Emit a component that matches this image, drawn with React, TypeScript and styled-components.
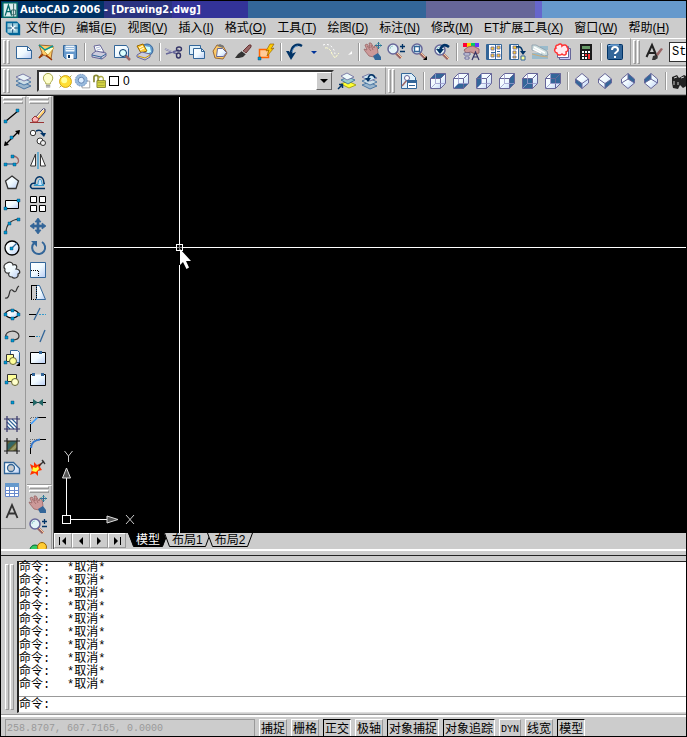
import React from "react";
import styled, { createGlobalStyle, css } from "styled-components";

const face = "#cccccc";
const shade = "#999999";
const ui = `"Liberation Sans", "Noto Sans CJK SC", sans-serif`;

const GlobalStyle = createGlobalStyle`
  *, *::before, *::after { box-sizing: border-box; }
  html, body { margin: 0; padding: 0; }
  body { background: ${face}; font-family: ${ui}; font-size: 12px; color: #000; }
  button, input, select { font: inherit; color: inherit; margin: 0; padding: 0; border: 0; border-radius: 0; background: none; }
  svg { display: block; flex: none; }
`;

/* ---------- icons, all drawn on a 20 x 20 grid ---------- */

const blue = "#336699";
const navy = "#003366";
const purple = "#666699";
const cyan = "#0099cc";

const Dot = ({ x, y }: { x: number; y: number }) => (
  <path d={`M${x - 1} ${y - 1}h3v3h-3z`} fill={cyan} stroke={navy} strokeWidth=".4" />
);

const cube = (facePath: string) => (
  <>
    <path d="M2.5 7.5 7.5 2.5h10v10l-5 5h-10z" fill="url(#glass)" />
    <path d={facePath} fill={blue} />
    <path d="M2.5 7.5 7.5 2.5h10v10l-5 5h-10zM2.5 7.5h10v10M12.5 7.5l5-5" fill="none" stroke={purple} />
    <path d="M7.500 3v9.500H17M7.500 12.500l-5 5" fill="none" stroke="#9999cc" strokeWidth=".800" />
  </>
);

const iso = (facePath: string, edges: string) => (
  <>
    <path d="M10 2.500L16.500 8v4L10 17.500 3.500 12V8z" fill="url(#glass)" />
    <path d={facePath} fill={blue} />
    <path d={`M10 2.500L16.500 8v4L10 17.500 3.500 12V8z${edges}`} fill="none" stroke={purple} />
  </>
);
const isoFront = "M3.500 8L10 12.500 16.500 8M10 12.500v5";
const isoBack = "M3.500 12L10 8l6.500 4M10 8V2.500";

const lens = (cx: number, cy: number) => (
  <>
    <path d={`M${cx + 3} ${cy + 4}l5 5`} stroke="#996666" strokeWidth="3" />
    <path d={`M${cx + 4} ${cy + 4}l5 5`} stroke="#ffcc99" />
    <circle cx={cx} cy={cy} r="5" fill="#e4f4f8" stroke={purple} strokeWidth="1.500" />
    <path d={`M${cx - 3} ${cy}a3 3 0 0 1 3-3`} stroke="#99cccc" fill="none" />
  </>
);

const hand = (
  <>
    <path d="M2 3l2-1 3 4-1-5 2 0 3 5 1-3 2 1 1 7-4 4-5-1-4-5-1-2 3 1z" fill="#cc9999" stroke="#996666" strokeWidth=".800" />
    <path d="M4 4l4 5M8 3l2 5" stroke="#996666" strokeWidth=".800" />
    <path d="M10 14l5-3 3 4v3h-6z" fill={blue} />
    <path d="M15.500 0v7M12 3.500h7" stroke={blue} />
    <path d="M14 1.500h3M14 5.500h3M13.500 2v3M17.500 2v3" stroke="#339999" strokeWidth=".600" />
  </>
);

const zoomRealtime = (
  <>
    {lens(7, 7)}
    <path d="M16.500 2v5M14 4.500h5M14 9.500h5" stroke={navy} strokeWidth="1.300" />
  </>
);

const sheets = (top: string) => (
  <>
    <path d="M2 14l7-3 8 4-7 3z" fill="#99b5cc" stroke={blue} strokeWidth=".800" />
    <path d="M2 10l7-3 8 4-7 3z" fill="#ccdde6" stroke={blue} strokeWidth=".800" />
    <path d="M2 6l7-3 8 4-7 3z" fill={top} stroke={purple} strokeWidth=".800" />
  </>
);

const icons: Record<string, React.ReactNode> = {
  blank: (
    <>
      <path d="M2.500 4.500h11l4 4v8h-15z" fill="url(#glass)" stroke={blue} />
      <path d="M13.500 4.500v4h4z" fill="#fff" stroke={blue} />
    </>
  ),
  open: (
    <>
      <path d="M2 3l14 1-2 13-7-4-5 3 3-5z" fill="#ffcc66" stroke="#996633" />
      <path d="M7 9l7-4 3 1-6 7z" fill="#ffffcc" stroke="#cc9933" strokeWidth=".800" />
      <path d="M2 3l6 5 8-4" stroke="#009999" fill="none" strokeWidth="1.400" />
      <path d="M9 13l6 5M2 16l4-4" stroke="#993300" strokeWidth="1.500" />
    </>
  ),
  save: (
    <>
      <path d="M3.500 3.500h13v13h-11l-2-2z" fill="#6699cc" stroke={blue} />
      <path d="M5.500 3.500h9v6h-9z" fill="#eef6fc" />
      <path d="M6 5.500h8M6 7.500h8" stroke="#99bbdd" />
      <path d="M6.500 12h7v5h-7z" fill="#fff" />
      <path d="M8 13h2v3H8z" fill={navy} />
    </>
  ),
  print: (
    <>
      <path d="M5 4l6-1 4 7-8 1z" fill="#fff" stroke={purple} />
      <path d="M7 6l4-1M8 8l4-1" stroke="#99aacc" strokeWidth=".800" />
      <path d="M3 12l4-3 10 2v3l-4 3-10-2z" fill="#ccccdd" stroke={purple} />
      <path d="M3 13l9 2 5-3M12 15v2" stroke={blue} fill="none" />
    </>
  ),
  preview: (
    <>
      <path d="M2.500 3.500h12l2 3v9h-14z" fill="url(#glass)" stroke={blue} />
      <path d="M13 13l5 5" stroke="#996666" strokeWidth="2.500" />
      <circle cx="11" cy="11" r="3.500" fill="#dff" stroke={navy} />
    </>
  ),
  publish: (
    <>
      <circle cx="12" cy="8" r="6" fill="#6699cc" stroke={blue} />
      <path d="M9 4l6 1 1 5-5 2z" fill="#ccffff" />
      <path d="M2 4l6-2 4 7-6 2z" fill="#ffcc33" stroke="#996600" />
      <path d="M4 6l4-2M5 8l4-2" stroke="#fff" />
      <path d="M2 13l5-3 8 2v3l-5 3-8-3z" fill="#ccccdd" stroke={purple} />
      <path d="M3 14l7 2 5-3" stroke="#cc9900" fill="none" />
    </>
  ),
  cut: (
    <>
      <path d="M1 7l12 5M2 12l13-4" stroke={purple} strokeWidth="1.600" />
      <path d="M1 7l8 3" stroke="#fff" strokeWidth=".600" />
      <ellipse cx="15" cy="7" rx="2.500" ry="2" fill="none" stroke="#333366" strokeWidth="1.400" />
      <ellipse cx="14.500" cy="13.500" rx="2" ry="2.500" fill="none" stroke="#333366" strokeWidth="1.400" />
    </>
  ),
  copy: (
    <>
      <path d="M2.500 3.500h11v9h-11z" fill="#dff0fa" stroke={blue} />
      <path d="M6.500 6.500h8l3 3v7h-11z" fill="url(#glass)" stroke={blue} />
      <path d="M14.500 6.500v3h3" fill="none" stroke={blue} />
    </>
  ),
  paste: (
    <>
      <path d="M7 3l6 1 4 7-4 6-8-1-2-7z" fill="#ffcc66" stroke="#996633" />
      <path d="M7 4l3-2 4 2-1 2z" fill="#777" />
      <path d="M7.500 6.500h5l4 4-3 4h-7z" fill="url(#glass)" stroke={purple} />
    </>
  ),
  brush: (
    <>
      <path d="M10 9l6-6h2v2l-5 6z" fill="#996666" stroke="#663333" />
      <path d="M2 16l3-4 4-3 4 3-3 3-4 1z" fill="#333" />
      <path d="M9 9l4 3" stroke="#ccc" />
    </>
  ),
  block: (
    <>
      <path d="M3.500 7.500h9v8h-9z" fill="#ffcc99" stroke="#ff6600" strokeWidth="1.500" />
      <path d="M14 2l-4 7 3-1-2 6 7-8-3 1 3-5z" fill="#ffcc00" stroke="#996600" strokeWidth=".700" />
      <Dot x={3} y={16} />
    </>
  ),
  undo: (
    <>
      <path d="M17 4C12 1 6 4 6 12" stroke={navy} strokeWidth="2.500" fill="none" />
      <path d="M1 9h3l2 3 5-2-5 8z" fill={navy} />
      <path d="M13 4c-3 0-5 2-6 6" stroke="#6699cc" fill="none" />
    </>
  ),
  redo: (
    <>
      <path d="M2 3c5-2 11 1 12 9" stroke="#fff" strokeDasharray="2 2" fill="none" />
      <path d="M4 6c3-1 6 2 7 6l3 4 4-5" stroke="#ffffcc" strokeDasharray="3 1" fill="none" />
    </>
  ),
  pan: hand,
  zoom: zoomRealtime,
  zoomWindow: (
    <>
      {lens(8, 7)}
      <path d="M5.500 4.500h5v5h-5z" fill="#fff" stroke={blue} strokeWidth="1.400" />
      <path d="M14 18h4v-4z" />
    </>
  ),
  zoomPrevious: (
    <>
      {lens(8, 8)}
      <path d="M17 5c-5-4-8-1-9 4" stroke={navy} strokeWidth="2.500" fill="none" />
      <path d="M4 7h8l-4 5z" fill={navy} />
    </>
  ),
  properties: (
    <>
      <path d="M2 1h4v4H2z" fill="#f03" />
      <path d="M6 1h4v4H6z" fill="#fc0" />
      <path d="M10 1h4v4h-4z" fill="#0c6" />
      <path d="M14 1h4v4h-4z" fill="#63f" />
      <path d="M3 8l4-3 5-1 6 3v4l-4 1-4-2-5 1z" fill="#cc9999" stroke="#996666" />
      <path d="M3 11h6v2H3zM4 15h4v2H4z" fill="#fff" stroke={purple} />
      <path d="M11 18l3.500-8 3.500 8M12 15h5" stroke="#333366" fill="none" strokeWidth="1.200" />
    </>
  ),
  designCenter: (
    <>
      <path d="M2.500 2.500h15v15h-15z" fill="#fff" stroke={blue} />
      <path d="M2 3h3v14H2z" fill={blue} />
      <path d="M7 5h3v3H7zM7 12h3v3H7zM13 4h3v3h-3zM13 12h3v3h-3z" fill="#ffcc33" stroke={purple} strokeWidth=".800" />
      <path d="M11.500 3v14M7 10.500h4M13 9.500h3" stroke={blue} />
    </>
  ),
  palettes: (
    <>
      <path d="M2.500 2.500h9v15h-9z" fill="#fff" stroke={blue} />
      <path d="M2 3h2v14H2z" fill={blue} />
      <path d="M6 4h4v3H6zM6 9h3v3H6zM6 14h3v2H6z" fill="#ffcc33" stroke={purple} strokeWidth=".800" />
      <path d="M9 5c5-1 6 1 7 6" stroke={navy} strokeWidth="1.500" fill="none" />
      <path d="M13 9h6l-3 4z" fill={navy} />
      <path d="M14 14h4v4h-4z" fill="#ffff99" stroke={blue} />
    </>
  ),
  sheetSet: (
    <>
      <path d="M2 11h16v6H2zM10 4h8v4h-8z" fill="#99bbcc" />
      <path d="M2 3l4 0 11 6 1 4-4 1-8-5-4-1z" fill="#ccdddd" stroke="#8899aa" strokeWidth=".800" />
      <path d="M4 5l11 6M3 7l8 4" stroke="#fff" strokeWidth="1.500" />
      <path d="M2 12l8 2 8 1" stroke="#ccaa77" fill="none" />
    </>
  ),
  markup: (
    <>
      <path d="M6.500 6.500h11v11h-11z" fill="#ccccff" stroke={purple} />
      <path d="M4.500 4.500h11v11h-11z" fill="#fff" stroke={purple} />
      <path d="M5 3c2-2 4-1 4 1 2-2 5-1 5 1 2 2 1 4-1 5 1 3-2 4-4 2-2 2-5 1-5-1-3-1-3-4-1-5-1-1 0-3 2-3z" fill="#ffe8ee" stroke="#ff3333" strokeWidth="1.500" />
    </>
  ),
  calculator: (
    <>
      <path d="M4 2h12v16H4z" fill="#1a1a1a" />
      <path d="M6 4h8v3H6z" fill="#669966" />
      <path d="M6 9h2v2H6zM9 9h2v2H9zM12 9h2v2h-2zM6 12h2v2H6zM6 15h2v2H6zM9 15h2v2H9z" fill="#fff" />
      <path d="M9 12h2v2H9zM12 12h2v5h-2z" fill="#ff3333" />
    </>
  ),
  help: (
    <>
      <rect x="2.500" y="2.500" width="15" height="15" rx="1" fill={blue} stroke={navy} />
      <path d="M3 4l3-1h8" stroke="#99ccff" fill="none" />
      <path d="M7 8c0-4 6-4 6 0 0 2-3 2-3 4" stroke="#fff" strokeWidth="2" fill="none" />
      <path d="M9 14h2v2H9z" fill="#fff" />
    </>
  ),
  textStyle: (
    <>
      <path d="M2.500 15L8 3l5 12M4 11h8" stroke="#222" strokeWidth="2" fill="none" />
      <path d="M12 12l5-6 2 1-5 7z" fill="#996666" />
      <path d="M8 18l1-4 3-1 2 3-3 2z" fill="#333" />
    </>
  ),
  layers: sheets("#e8f2f6"),
  layerCurrent: (
    <>
      <path d="M4 13l7-3 8 4-7 3z" fill="#ffff33" stroke="#999900" strokeWidth=".800" />
      <path d="M4 9l7-3 7 3-7 4z" fill="#99cccc" stroke={blue} strokeWidth=".800" />
      <path d="M4 5l6-3 7 4-7 3z" fill="#eefafa" stroke={purple} strokeWidth=".800" />
      <path d="M1 18l4-4M2 13.500h3.500V17" stroke={navy} fill="none" strokeWidth="1.500" />
    </>
  ),
  layerPrevious: (
    <>
      {sheets("#cce6f2")}
      <path d="M15 7c-1-4-6-5-7 1" stroke={navy} strokeWidth="1.600" fill="none" />
      <path d="M5 7h6l-3 4z" fill={navy} />
    </>
  ),
  namedViews: (
    <>
      <path d="M2.500 2.500h10l4 4v11h-14z" fill="#dff0fa" stroke={blue} />
      <path d="M3 15l5-6" stroke="#996666" strokeWidth="1.500" />
      <circle cx="8" cy="7" r="2.500" fill="#fff" stroke={purple} />
      <path d="M8.500 9.500h9v8h-9z" fill="#fff" stroke={blue} />
      <path d="M8 9h10v3H8z" fill={blue} />
      <path d="M10 14.500h6" stroke={blue} />
    </>
  ),
  viewTop: cube("M2.500 7.500l5-5h10l-5 5z"),
  viewBottom: cube("M2.500 17.500l5-5h10l-5 5z"),
  viewLeft: cube("M2.500 7.500l5-5v10l-5 5z"),
  viewRight: cube("M12.500 7.500l5-5v10l-5 5z"),
  viewFront: cube("M2.500 7.500h10v10h-10z"),
  viewBack: cube("M7.500 2.500h10v10h-10z"),
  isoSW: iso("M3.500 8l6.500 4.500v5L3.500 12z", isoFront),
  isoSE: iso("M16.500 8L10 12.500v5l6.500-5.500z", isoFront),
  isoNE: iso("M10 2.500L16.500 8v4L10 8z", isoBack),
  isoNW: iso("M10 2.500L3.500 8v4L10 8z", isoBack),
  camera: (
    <>
      <path d="M2 6l5-2 2 3 5-3 4 2v8l-5 3-3-3-2 4-5-1-1-5z" fill="#222" />
      <path d="M4 7l3-1M4 10v4M11 7l3-1M8 11v3" stroke="#ccc" />
    </>
  ),
  bulb: (
    <>
      <path d="M7 13c0-3-3-3-3-7a5 5 0 0 1 11 0c0 4-3 4-3 7z" fill="#ffffcc" stroke="#999933" />
      <path d="M7 14h5v3H7z" fill="#888" />
      <path d="M7 15.500h5" stroke="#fff" strokeWidth=".700" />
    </>
  ),
  sun: (
    <>
      <path d="M3 3l14 14M17 3L3 17" stroke="#999933" />
      <circle cx="10" cy="10" r="7" fill="#ffdd33" stroke="#cc9900" />
      <circle cx="8.500" cy="8.500" r="3.500" fill="#ffff99" />
    </>
  ),
  freeze: (
    <>
      <path d="M9.500 9.500h9v8h-9z" fill="#fff" stroke="#999" />
      <circle cx="8.500" cy="8.500" r="7" fill="#99bbdd" stroke="#6688bb" strokeDasharray="2 1" />
      <circle cx="8.500" cy="8.500" r="3.500" fill="#ddeeff" stroke="#5577aa" />
    </>
  ),
  unlock: (
    <>
      <path d="M3.500 11V5c0-3 5-3 5 0v5" fill="none" stroke="#888833" strokeWidth="2" />
      <path d="M8.500 8c0-5 6-5 6-1v2" fill="none" stroke="#aaaa44" strokeWidth="1.500" />
      <path d="M7 9h10v8H7z" fill="#dddd44" stroke="#777722" />
      <path d="M8 11.500h8M8 14.500h8" stroke="#999933" />
    </>
  ),
  line: (
    <>
      <path d="M4 15L16 5" stroke="#000" strokeWidth="1.200" />
      <Dot x={3} y={15} />
      <Dot x={15} y={4} />
    </>
  ),
  xline: (
    <>
      <path d="M3 17L17 3" stroke="#000" strokeWidth="1.200" />
      <path d="M2 18l1-5 4 4zM18 2l-1 5-4-4z" />
      <Dot x={9} y={9} />
    </>
  ),
  pline: (
    <>
      <path d="M3 14h9" stroke={blue} strokeWidth="1.300" />
      <path d="M13 14c5 0 5-7-2-8" stroke="#996666" strokeWidth="1.300" fill="none" />
      <Dot x={3} y={14} />
      <Dot x={12} y={14} />
      <Dot x={10} y={6} />
    </>
  ),
  polygon: <path d="M10 4l6.500 5-2.500 7.500H6L3.500 9z" fill="url(#glass)" stroke="#333" strokeWidth="1.300" />,
  rectangle: (
    <>
      <path d="M3.500 6.500h13v8h-13z" fill="url(#glass)" stroke="#000" />
      <Dot x={3} y={14} />
      <Dot x={16} y={6} />
    </>
  ),
  arc: (
    <>
      <path d="M4 17C4 9 8 4 17 3" stroke="#333" fill="none" strokeWidth="1.200" />
      <Dot x={3} y={16} />
      <Dot x={7} y={7} />
      <Dot x={16} y={3} />
    </>
  ),
  circle: (
    <>
      <circle cx="10" cy="10" r="7" fill="url(#glass)" stroke="#000" strokeWidth="1.300" />
      <path d="M9 11l6-6" stroke={blue} strokeWidth="1.200" />
      <Dot x={9} y={10} />
    </>
  ),
  cloud: (
    <path
      d="M5 3c3-2 6 0 6 2 3-1 5 1 3 4 4 0 5 4 2 5 1 4-4 5-6 3-3 0-4-2-3-4-3 1-5-2-4-4-2-2-1-5 2-6z"
      fill="url(#glass)"
      stroke="#333"
      strokeWidth="1.200"
    />
  ),
  spline: <path d="M3 16c4 1 4-4 5-7 2-4 4 3 6 0 1-2 1-4 3-5" stroke="#333" fill="none" strokeWidth="1.200" />,
  ellipse: (
    <>
      <ellipse cx="10" cy="10" rx="6.500" ry="4" fill="url(#glass)" stroke="#000" strokeWidth="1.200" />
      <Dot x={3} y={10} />
      <Dot x={16} y={10} />
      <Dot x={10} y={6} />
      <Dot x={10} y={14} />
    </>
  ),
  ellipseArc: (
    <>
      <path d="M4 11c-2-7 13-8 13-1 0 3-4 4-7 4" stroke="#333" fill="none" strokeWidth="1.200" />
      <Dot x={4} y={11} />
      <Dot x={10} y={14} />
    </>
  ),
  insertBlock: (
    <>
      <path d="M8.500 2.500h7l2 2v10h-9z" fill="url(#glass)" stroke={blue} />
      <path d="M4.500 6.500h7v7h-7z" fill="#ffff99" stroke="#333" />
      <circle cx="11" cy="13" r="3.500" fill="#ffff99" stroke="#666633" />
      <Dot x={3} y={14} />
      <path d="M14 18h4v-4z" />
    </>
  ),
  makeBlock: (
    <>
      <path d="M5.500 4.500h9v7h-9z" fill="#ffff99" stroke="#333" />
      <circle cx="13" cy="12" r="3.500" fill="#ffffcc" stroke="#666633" />
      <Dot x={4} y={12} />
    </>
  ),
  point: <Dot x={10} y={10} />,
  hatch: (
    <>
      <path d="M5 5h10v10H5z" fill="#fff" />
      <path d="M5 8l7 7M5 12l3 3M6 5l9 9M10 5l5 5" stroke={blue} strokeWidth="1.200" />
      <path d="M5 2v16M15 2v16M2 5h16M2 15h16" stroke="#333366" strokeWidth="1.200" />
    </>
  ),
  gradient: (
    <>
      <path d="M5 5h10v10H5z" fill="#666633" />
      <path d="M5 15V9l4-4h6z" fill="#336666" />
      <path d="M7 15l8-8v4l-4 4z" fill="#999966" />
      <path d="M5 2v16M15 2v16M2 5h16M2 15h16" stroke="#222" strokeWidth="1.200" />
    </>
  ),
  region: (
    <>
      <path d="M2.500 4.500h9l6 6v5h-15z" fill="url(#glass)" stroke={blue} strokeWidth="1.300" />
      <circle cx="9" cy="10" r="3.500" fill={face} stroke={blue} strokeWidth="1.300" />
    </>
  ),
  table: (
    <>
      <path d="M3.500 3.500h13v13h-13z" fill="#fff" stroke="#6688cc" />
      <path d="M3 3h14v4H3z" fill="#6699cc" />
      <path d="M3 10.500h14M3 13.500h14M7.500 7v10M12.500 7v10" stroke="#6688cc" />
    </>
  ),
  mtext: <path d="M4.500 16L10 3l5.500 13M6 11.500h8" stroke="#333" strokeWidth="1.800" fill="none" />,
  erase: (
    <>
      <path d="M2 16.500h14" stroke="#993333" />
      <path d="M7 12l8-9h2v3l-7 8z" fill="#ffcc66" stroke="#333366" />
      <path d="M9 11l7-8" stroke="#fff" />
      <path d="M4 13l3-3 4 3-2 3H5z" fill="#ffb3b3" stroke="#993333" />
    </>
  ),
  copyObject: (
    <>
      <circle cx="5" cy="5" r="2.700" fill="#fff" stroke="#333" />
      <circle cx="12" cy="13" r="3" fill="#fff" stroke="#333" />
      <circle cx="15" cy="15" r="2.500" fill="#eee" stroke="#333" />
      <path d="M8 3c4-2 6 0 7 3" stroke={navy} strokeWidth="1.500" fill="none" />
      <path d="M12 5h6l-2 4z" fill={navy} />
    </>
  ),
  mirror: (
    <>
      <path d="M7.500 4v12H2.500zM12.500 4v12h5z" fill="#fff" stroke="#333" />
      <path d="M10 2v17" stroke="#3399cc" strokeWidth="1.300" />
    </>
  ),
  offset: (
    <>
      <path d="M17 16.500H4c-3-2-1-6 3-5 0-9 9-9 9 0h1" fill="none" stroke={navy} strokeWidth="1.500" />
      <path d="M16 13.500H6c-1-1 3-1 4-1 0-7 4-7 4 0h2" fill="#cce6ff" stroke="#3399cc" />
    </>
  ),
  array: <path d="M2.500 2.500h6v6h-6zM11.500 2.500h6v6h-6zM2.500 11.500h6v6h-6zM11.500 11.500h6v6h-6z" fill="#fff" stroke="#000" />,
  move: (
    <path d="M10 2l3 4h-2v3h3V7l4 3-4 3v-2h-3v3h2l-3 4-3-4h2v-3H6v2l-4-3 4-3v2h3V6H7z" fill={blue} stroke={blue} strokeWidth=".700" />
  ),
  rotate: (
    <>
      <path d="M6 5a6.500 6.500 0 1 0 8-1" stroke={blue} strokeWidth="2" fill="none" />
      <path d="M3 3h6v6z" fill={blue} />
    </>
  ),
  scale: (
    <>
      <path d="M2.500 2.500h15v15h-15z" fill="url(#glass)" stroke={blue} />
      <path d="M3 10.500h7.500V17" stroke="#000" strokeDasharray="1 1" fill="none" />
    </>
  ),
  stretch: (
    <>
      <path d="M8.500 3.500h3l6 14h-9z" fill="url(#glass)" stroke={blue} />
      <path d="M3.500 3v14.500M3 3.500h5" stroke="#000" />
      <path d="M8.500 3v14M3 17.500h6" stroke="#000" strokeDasharray="1 1" />
    </>
  ),
  trim: (
    <>
      <path d="M1 10.500h7" stroke="#000" />
      <path d="M6 16l6-12" stroke={blue} strokeWidth="1.300" />
      <path d="M11 10.500h7" stroke="#3399cc" strokeDasharray="2 1" />
    </>
  ),
  extend: (
    <>
      <path d="M1 10.500h6" stroke="#000" />
      <path d="M8 10.500h4" stroke="#3399cc" strokeDasharray="2 1" />
      <path d="M12 16l5-12" stroke={blue} strokeWidth="1.300" />
    </>
  ),
  breakPoint: (
    <>
      <path d="M2.500 4.500h15v11h-15z" fill="url(#glass)" stroke="#000" />
      <path d="M11 3h3v3h-3z" fill={blue} />
    </>
  ),
  breakGap: (
    <>
      <path d="M2.500 4.500h15v11h-15z" fill="url(#glass)" />
      <path d="M5 4.500H2.500v11h15v-11H15" fill="none" stroke="#000" />
      <path d="M4 3h3v3H4zM13 3h3v3h-3z" fill={blue} />
    </>
  ),
  join: (
    <>
      <path d="M2 10.500h16" stroke="#000" />
      <path d="M5 7l5 3.500L5 14zM15 7l-5 3.500 5 3.500z" fill="#226666" />
    </>
  ),
  chamfer: (
    <>
      <path d="M2.500 18V10M10 3.500h8" stroke="#000" />
      <path d="M3 10l7-7" stroke="#3399ff" strokeWidth="1.500" />
      <path d="M2.500 9V3.500H10" stroke="#666" strokeDasharray="1 1" fill="none" />
    </>
  ),
  fillet: (
    <>
      <path d="M2.500 18v-7M11 3.500h7" stroke="#000" />
      <path d="M3 12c0-5 4-8 9-8.500" stroke="#3377cc" strokeWidth="2" fill="none" />
      <path d="M2.500 10V3.500H10" stroke="#666" strokeDasharray="1 1" fill="none" />
    </>
  ),
  explode: (
    <>
      <path d="M2 6l4 2 0-4 3 3 4-2-1 4 2 3-4 1 0 5-3-3-5 2 2-5z" fill="#ff3300" />
      <path d="M5 9l3 1 2-2 1 3-3 3-4-1z" fill="#ffff33" />
      <path d="M11 8l5-5M14 2l3 4" stroke="#333" strokeWidth="1.300" />
    </>
  ),
  orbit: (
    <>
      <circle cx="7" cy="11" r="5" fill="#33cc66" stroke="#006633" />
      <circle cx="14" cy="8" r="4.500" fill="#ffcc33" stroke="#996600" />
      <path d="M6 13h8v5H6z" fill={blue} />
    </>
  ),
  appLogo: (
    <>
      <path d="M1 1h18v18H1z" fill="#ddeeee" stroke="#006666" strokeWidth="2" />
      <path d="M4 17L8 4l4 13M5 12h7" stroke="#006666" fill="none" strokeWidth="1.600" />
      <path d="M12 10h5v6h-5zM14.500 2v17" stroke="#336666" fill="none" strokeWidth="1.200" />
    </>
  ),
  docLogo: (
    <>
      <path d="M1 2h14l4 4v13H6l-5-4z" fill="#006699" />
      <path d="M3 4h13v12H3z" fill="#99ccdd" />
      <path d="M9.500 4v12M3 10h13" stroke={navy} />
      <path d="M7 7l6 6M13 7l-6 6" stroke="#fff" strokeWidth="1.500" />
    </>
  ),
};

const Icon = ({ name, size = 20 }: { name: string; size?: number }) => (
  <svg width={size} height={size} viewBox="0 0 20 20" aria-hidden="true">
    {icons[name]}
  </svg>
);

const Gradients = () => (
  <HiddenDefs aria-hidden="true">
    <defs>
      <linearGradient id="glass" x1="0" y1="0" x2="1" y2="1">
        <stop offset="0" stopColor="#ffffff" />
        <stop offset=".5" stopColor="#f0faff" />
        <stop offset="1" stopColor="#b8ccf4" />
      </linearGradient>
    </defs>
  </HiddenDefs>
);

/* ---------- frame ---------- */

const HiddenDefs = styled.svg`
  position: absolute;
  width: 0;
  height: 0;
`;

const Frame = styled.div`
  display: flex;
  flex-direction: column;
  height: 100vh;
  min-height: 480px;
  border: 1px solid #000;
  background: ${face};
  overflow: hidden;
`;

const TitleBar = styled.header`
  display: flex;
  align-items: center;
  gap: 2px;
  flex: none;
  height: 17px;
  padding-left: 1px;
  overflow: hidden;
  background: linear-gradient(
    90deg,
    #003366 0 15%, #2a3380 15% 25%, #333399 25% 36%, #336699 36% 62%,
    #666699 62% 78%, #6666cc 78% 79%, #6699cc 79%
  );
`;

const Title = styled.h1`
  margin: 0;
  color: #fff;
  font: bold 11px/16px "DejaVu Sans Condensed", "DejaVu Sans", sans-serif;
  white-space: pre;
`;

const MenuBar = styled.nav`
  display: flex;
  align-items: center;
  gap: 5px;
  flex: none;
  height: 20px;
  padding-left: 4px;
  overflow: hidden;
`;

const Menus = styled.div`
  display: flex;
  gap: 11px;
  white-space: nowrap;
`;

const MenuButton = styled.button`
  flex: none;
  font-size: 12px;
  line-height: 18px;
`;

const ToolRows = styled.div`
  display: grid;
  flex: none;
  gap: 1px;
`;

const ToolRow = styled.div`
  display: flex;
  height: 28px;
  min-width: 0;
  overflow: hidden;
`;

const Toolbar = styled.div<{ $grow?: boolean }>`
  display: flex;
  align-items: center;
  flex: ${(p) => (p.$grow ? "1 0 auto" : "none")};
  padding: 0 3px 0 1px;
  border-top: 1px solid #fff;
  border-right: 1px solid ${shade};
  border-bottom: 1px solid ${shade};
`;

const grip = css`
  background: ${face};
  border: 1px solid;
  border-color: #fff ${shade} ${shade} #fff;
`;

const Grip = styled.span<{ $flat?: boolean }>`
  display: flex;
  flex: none;
  flex-direction: ${(p) => (p.$flat ? "column" : "row")};
  gap: 1px;
  margin: ${(p) => (p.$flat ? "0 2px 1px" : "0 3px 0 1px")};
  &::before,
  &::after {
    content: "";
    ${grip}
    width: ${(p) => (p.$flat ? "20px" : "3px")};
    height: ${(p) => (p.$flat ? "3px" : "24px")};
  }
`;

const ToolButton = styled.button<{ $narrow?: boolean }>`
  display: flex;
  align-items: center;
  flex: none;
  width: ${(p) => (p.$narrow ? 13 : 23)}px;
  height: 22px;
  padding-left: ${(p) => (p.$narrow ? 3 : 1)}px;
`;

const Divider = styled.span`
  flex: none;
  width: 2px;
  height: 18px;
  margin: 0 2px;
  border-left: 1px solid ${shade};
  border-right: 1px solid #fff;
`;

const LayerBox = styled.label`
  display: flex;
  align-items: center;
  flex: none;
  width: 297px;
  height: 22px;
  margin: 0 2px 0 1px;
  padding-left: 1px;
  background: #fff;
  border: 2px solid;
  border-color: #333 ${face} ${face} #333;
`;

const Swatch = styled.span`
  width: 10px;
  height: 10px;
  margin: 0 4px 0 1px;
  border: 1px solid #000;
`;

const LayerIcon = styled.span`
  display: flex;
  justify-content: center;
  width: 17px;
`;

const LayerSelect = styled.select`
  flex: 1;
  min-width: 0;
  height: 18px;
  appearance: none;
  font-size: 12px;
`;

const DropArrow = styled.span`
  display: flex;
  align-items: center;
  justify-content: center;
  width: 16px;
  height: 18px;
  background: ${face};
  border: 1px solid;
  border-color: #fff #666 #666 #fff;
`;

const StyleBox = styled.input`
  flex: 1;
  width: 40px;
  min-width: 18px;
  height: 20px;
  margin-left: 3px;
  padding-left: 2px;
  background: #fff;
  border: 1px solid #333;
  border-right: 0;
  font: 12px "Liberation Mono", monospace;
`;

/* ---------- work area ---------- */

const Work = styled.main`
  display: flex;
  flex: 1;
  min-height: 0;
  overflow: hidden;
  border-top: 1px solid #222;
`;

const Column = styled.div`
  display: flex;
  flex-direction: column;
  align-items: flex-start;
  flex: none;
  width: 26px;
  overflow: hidden;
`;

const SideBar = styled.div`
  display: flex;
  flex-direction: column;
  align-items: flex-start;
  flex: none;
  width: 25px;
  padding-bottom: 5px;
  background: ${face};
  border-top: 1px solid #fff;
  border-right: 1px solid ${shade};
  border-bottom: 1px solid ${shade};
`;

const DrawingPane = styled.section`
  display: flex;
  flex-direction: column;
  flex: 1;
  min-width: 0;
  border-left: 1px solid #555;
`;

const Canvas = styled.svg`
  flex: 1;
  width: 100%;
  min-height: 0;
  background: #000;
`;

const TabRow = styled.div`
  display: flex;
  flex: none;
  height: 16px;
`;

const NavButton = styled.button`
  display: flex;
  align-items: center;
  justify-content: center;
  width: 18px;
  height: 15px;
  background: ${face};
  border: 1px solid;
  border-color: #fff ${shade} ${shade} #fff;
`;

const Tabs = styled.div`
  display: flex;
  margin-left: 2px;
`;

const TabShape = styled.span`
  display: flex;
  align-items: flex-start;
  & + & {
    margin-left: -4px;
  }
`;

const Tab = styled.button<{ $active?: boolean }>`
  height: 14px;
  padding: 0 2px;
  border-bottom: 1px solid #000;
  background: ${(p) => (p.$active ? "#000" : face)};
  color: ${(p) => (p.$active ? "#fff" : "#000")};
  font-size: 12px;
  line-height: 12px;
`;

const Splitter = styled.div`
  flex: none;
  height: 7px;
  border-top: 2px solid #fff;
  border-bottom: 1px solid #222;
`;

/* ---------- command window and status bar ---------- */

const CommandWindow = styled.section`
  display: flex;
  flex: none;
  gap: 3px;
  padding: 5px 0 1px 4px;
`;

const CommandGrip = styled.span`
  display: flex;
  flex: none;
  gap: 1px;
  padding: 3px 0;
  &::before,
  &::after {
    content: "";
    ${grip}
    width: 4px;
  }
`;

const CommandText = styled.div`
  flex: 1;
  min-width: 0;
  background: #fff;
  border-left: 2px solid #222;
  border-top: 1px solid #222;
  border-bottom: 1px solid #ddd;
  font: 12px/13px "Liberation Mono", "Noto Sans CJK SC", monospace;
`;

const History = styled.ol`
  margin: 0;
  padding: 0 0 4px;
  list-style: none;
  border-bottom: 1px solid ${shade};
`;

const Entry = styled.li`
  display: flex;
  height: 13px;
  white-space: pre;
`;

const Prompt = styled.span`
  flex: none;
  width: 48px;
`;

const CommandLine = styled.label`
  display: flex;
  height: 15px;
  padding-top: 2px;
`;

const CommandInput = styled.input`
  flex: 1;
  min-width: 0;
  height: 13px;
  outline: none;
`;

const StatusBar = styled.footer`
  display: flex;
  flex: none;
  gap: 4px;
  height: 22px;
  padding: 4px 0 0 4px;
  overflow: hidden;
  border-top: 1px solid ${shade};
  box-shadow: inset 0 2px #fff;
`;

const Coordinates = styled.output`
  flex: none;
  width: 250px;
  padding-left: 1px;
  border: 1px solid ${shade};
  border-bottom: 0;
  color: ${shade};
  font: 10px/18px "Liberation Mono", monospace;
  white-space: pre;
`;

const StatusButton = styled.button<{ $on?: boolean; $mono?: boolean }>`
  flex: none;
  height: 20px;
  padding: 1px 1px 0;
  border: 1px solid;
  border-color: ${(p) => (p.$on ? "#000 #fff #fff #000" : `#fff ${shade} ${shade} #fff`)};
  font-family: ${(p) => (p.$mono ? `"Liberation Mono", monospace` : ui)};
  font-size: ${(p) => (p.$mono ? 10 : 12)}px;
  line-height: 17px;
  white-space: nowrap;
`;

/* ---------- data ---------- */

const menus = [
  ["文件", "F"], ["编辑", "E"], ["视图", "V"], ["插入", "I"], ["格式", "O"], ["工具", "T"],
  ["绘图", "D"], ["标注", "N"], ["修改", "M"], ["ET扩展工具", "X"], ["窗口", "W"], ["帮助", "H"],
];

const standardTools = [
  "blank", "open", "save", "|", "print", "preview", "publish", "|", "cut", "copy", "paste", "brush", "block", "|",
  "undo", "undo list", "redo", "redo list", "|", "pan", "zoom", "zoomWindow", "zoomPrevious", "|",
  "properties", "designCenter", "palettes", "sheetSet", "markup", "calculator", "|", "help",
];

const viewTools = [
  "namedViews", "|", "viewTop", "viewBottom", "viewLeft", "viewRight", "viewFront", "viewBack", "|",
  "isoSW", "isoSE", "isoNE", "isoNW", "|", "camera",
];

const drawTools = [
  "line", "xline", "pline", "polygon", "rectangle", "arc", "circle", "cloud", "spline", "ellipse", "ellipseArc",
  "insertBlock", "makeBlock", "point", "hatch", "gradient", "region", "table", "mtext",
];

const modifyTools = [
  "erase", "copyObject", "mirror", "offset", "array", "move", "rotate", "scale", "stretch", "trim", "extend",
  "breakPoint", "breakGap", "join", "chamfer", "fillet", "explode",
];

const statusToggles = [
  { label: "捕捉" }, { label: "栅格" }, { label: "正交", on: true }, { label: "极轴" },
  { label: "对象捕捉", on: true }, { label: "对象追踪", on: true }, { label: "DYN", mono: true },
  { label: "线宽" }, { label: "模型", on: true },
];

const navArrows = [
  { label: "First layout", d: "M1 1h1v8H1zM8 1v8L4 5z" },
  { label: "Previous layout", d: "M7 1v8L3 5z" },
  { label: "Next layout", d: "M3 1v8l4-4z" },
  { label: "Last layout", d: "M2 1v8l4-4zM8 1h1v8H8z" },
];

const Tools = ({ names }: { names: string[] }) => (
  <>
    {names.map((name, i) => {
      if (name === "|") return <Divider key={i} />;
      if (name.endsWith(" list")) {
        return (
          <ToolButton key={i} $narrow aria-label={name}>
            <svg width="7" height="7" viewBox="0 0 7 7">
              {name === "undo list" ? <path d="M1 2h6L4 5z" fill="#003399" /> : <path d="M2 6l4-4v3z" fill="#fff" />}
            </svg>
          </ToolButton>
        );
      }
      return (
        <ToolButton key={i} aria-label={name}>
          <Icon name={name} />
        </ToolButton>
      );
    })}
  </>
);

const SideTools = ({ names }: { names: string[] }) => (
  <SideBar role="toolbar">
    <Grip $flat />
    <Tools names={names} />
  </SideBar>
);

const LayoutTab = ({ label, active }: { label: string; active?: boolean }) => (
  <TabShape>
    <svg width="6" height="14" viewBox="0 0 6 14">
      <path d="M0 0l5.500 13.500H6V0z" fill={active ? "#000" : face} />
      <path d="M.5 0l5 13.500H6" stroke="#000" fill="none" />
    </svg>
    <Tab $active={active}>{label}</Tab>
    <svg width="6" height="14" viewBox="0 0 6 14">
      <path d="M6 0L.5 13.500H0V0z" fill={active ? "#000" : face} />
      <path d="M5.500 0l-5 13.500H0" stroke="#000" fill="none" />
    </svg>
  </TabShape>
);

const Drawing = () => (
  <Canvas role="img" aria-label="Model space">
    <g stroke="#fff" shapeRendering="crispEdges">
      <line x1="125.500" y1="1" x2="125.500" y2="148" />
      <line x1="125.500" y1="169" x2="125.500" y2="100%" />
      <line x1="0" y1="151.500" x2="100%" y2="151.500" />
      <rect x="122.500" y="148.500" width="6" height="6" fill="#000" />
      <path d="M125.500 149v5M123 151.500h5" stroke="#888" />
    </g>
    <path d="M126 153v16l3-3 3.500 7 2.500-1.500-3-6.500h5z" fill="#fff" />
    <svg y="100%" overflow="visible">
      <path d="M8.500-17.500h8v8h-8zM12.500-18v-38M17-13.500h36" stroke="#fff" fill="none" shapeRendering="crispEdges" />
      <path d="M12.500-65l-4 10h8zM64-13.500l-11-3.500v7z" stroke="#ddd" fill="#555" />
      <path d="M10.500-82l4 5 4-5M14.500-77v6M72-18l8 9M80-18l-8 9" stroke="#ccc" fill="none" />
    </svg>
  </Canvas>
);

export default function App() {
  return (
    <Frame>
      <GlobalStyle />
      <Gradients />
      <TitleBar>
        <Icon name="appLogo" size={16} />
        <Title>AutoCAD 2006 - [Drawing2.dwg]</Title>
      </TitleBar>
      <MenuBar>
        <MenuButton aria-label="Document">
          <Icon name="docLogo" size={16} />
        </MenuButton>
        <Menus>
          {menus.map(([label, key]) => (
            <MenuButton key={key}>
              {label}(<u>{key}</u>)
            </MenuButton>
          ))}
        </Menus>
      </MenuBar>

      <ToolRows>
        <ToolRow>
          <Toolbar role="toolbar">
            <Grip />
            <Tools names={standardTools} />
          </Toolbar>
          <Toolbar role="toolbar" $grow>
            <Grip />
            <Tools names={["textStyle"]} />
            <StyleBox aria-label="Text style" defaultValue="St" />
          </Toolbar>
        </ToolRow>

        <ToolRow>
          <Toolbar role="toolbar">
            <Grip />
            <Tools names={["layers"]} />
            <LayerBox>
              {["bulb", "sun", "freeze", "unlock"].map((name) => (
                <LayerIcon key={name}>
                  <Icon name={name} size={17} />
                </LayerIcon>
              ))}
              <Swatch />
              <LayerSelect aria-label="Layer">
                <option>0</option>
              </LayerSelect>
              <DropArrow>
                <svg width="8" height="4" viewBox="0 0 8 4">
                  <path d="M0 0h8L4 4z" />
                </svg>
              </DropArrow>
            </LayerBox>
            <Tools names={["layerCurrent", "layerPrevious"]} />
          </Toolbar>
          <Toolbar role="toolbar" $grow>
            <Grip />
            <Tools names={viewTools} />
          </Toolbar>
        </ToolRow>
      </ToolRows>

      <Work>
        <Column>
          <SideTools names={drawTools} />
        </Column>
        <Column>
          <SideTools names={modifyTools} />
          <SideTools names={["pan", "zoom", "orbit"]} />
        </Column>
        <DrawingPane>
          <Drawing />
          <TabRow>
            {navArrows.map((a) => (
              <NavButton key={a.label} aria-label={a.label}>
                <svg width="10" height="10" viewBox="0 0 10 10">
                  <path d={a.d} />
                </svg>
              </NavButton>
            ))}
            <Tabs>
              <LayoutTab label="模型" active />
              <LayoutTab label="布局1" />
              <LayoutTab label="布局2" />
            </Tabs>
          </TabRow>
        </DrawingPane>
      </Work>

      <Splitter />

      <CommandWindow>
        <CommandGrip />
        <CommandText>
          <History>
            {Array.from({ length: 10 }, (_, i) => (
              <Entry key={i}>
                <Prompt>命令:</Prompt>
                <span>*取消*</span>
              </Entry>
            ))}
          </History>
          <CommandLine>
            <Prompt>命令:</Prompt>
            <CommandInput />
          </CommandLine>
        </CommandText>
      </CommandWindow>

      <StatusBar>
        <Coordinates>258.8707, 607.7165, 0.0000</Coordinates>
        {statusToggles.map((t) => (
          <StatusButton key={t.label} $on={t.on} $mono={t.mono} aria-pressed={!!t.on}>
            {t.label}
          </StatusButton>
        ))}
      </StatusBar>
    </Frame>
  );
}
